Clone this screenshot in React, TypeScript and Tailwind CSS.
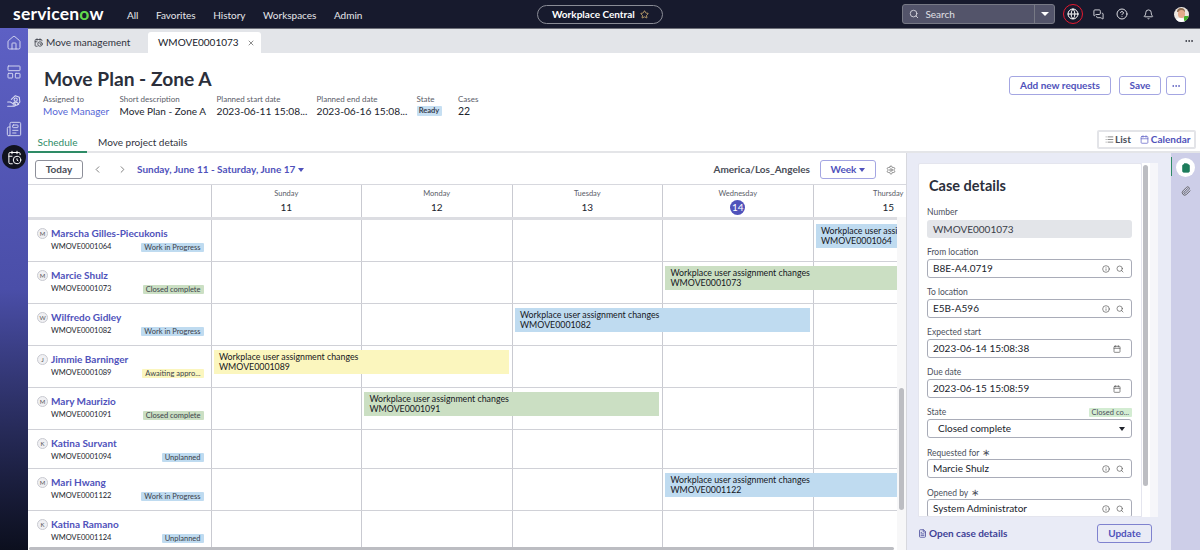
import {
  Bell,
  Calendar,
  CalendarClock,
  ChevronLeft,
  ChevronRight,
  CircleHelp,
  Clipboard,
  Ellipsis,
  FileText,
  Globe,
  Home,
  Info,
  LayoutPanelTop,
  List,
  MessagesSquare,
  Newspaper,
  Paperclip,
  Search,
  Settings,
  Star,
  X,
} from 'lucide-react';

const rows = [
  { letter: 'M', name: 'Marscha Gilles-Piecukonis', id: 'WMOVE0001064', status: 'Work in Progress', tone: 'blue', h: 'h-[42px]' },
  { letter: 'M', name: 'Marcie Shulz', id: 'WMOVE0001073', status: 'Closed complete', tone: 'green', h: 'h-[42px]' },
  { letter: 'W', name: 'Wilfredo Gidley', id: 'WMOVE0001082', status: 'Work in Progress', tone: 'blue', h: 'h-[42px]' },
  { letter: 'J', name: 'Jimmie Barninger', id: 'WMOVE0001089', status: 'Awaiting appro...', tone: 'yellow', h: 'h-[42px]' },
  { letter: 'M', name: 'Mary Maurizio', id: 'WMOVE0001091', status: 'Closed complete', tone: 'green', h: 'h-[42px]' },
  { letter: 'K', name: 'Katina Survant', id: 'WMOVE0001094', status: 'Unplanned', tone: 'blue', h: 'h-[39px]' },
  { letter: 'M', name: 'Mari Hwang', id: 'WMOVE0001122', status: 'Work in Progress', tone: 'blue', h: 'h-[42px]' },
  { letter: 'K', name: 'Katina Ramano', id: 'WMOVE0001124', status: 'Unplanned', tone: 'blue', h: 'h-[42px]' },
];

const toneClass: Record<string, string> = {
  blue: 'bg-[#bfdbf0]',
  green: 'bg-[#cbdfc3]',
  yellow: 'bg-[#fbf6be]',
};

const days = [
  { name: 'Sunday', num: '11' },
  { name: 'Monday', num: '12' },
  { name: 'Tuesday', num: '13' },
  { name: 'Wednesday', num: '14', today: true },
  { name: 'Thursday', num: '15' },
];

// which day column each case starts in, and how many it spans
const eventPlace: Record<string, string> = {
  WMOVE0001064: 'col-start-6 col-span-1 ml-[3px]',
  WMOVE0001073: 'col-start-5 col-span-2 ml-[3px]',
  WMOVE0001082: 'col-start-4 col-span-2 ml-[3px] mr-[3px]',
  WMOVE0001089: 'col-start-2 col-span-2 ml-[3px] mr-[3px]',
  WMOVE0001091: 'col-start-3 col-span-2 ml-[3px] mr-[3px]',
  WMOVE0001122: 'col-start-5 col-span-2 ml-[3px]',
};

function Field({
  label,
  value,
  date,
  star,
}: {
  label: string;
  value: string;
  date?: boolean;
  star?: boolean;
}) {
  return (
    <div className="mb-[3px] h-[37px]">
      <div className="h-[15px] text-[8.5px] leading-[17px] text-[#4b4f5c]">
        {label}
        {star && <span className="ml-[3px] text-[10px]">∗</span>}
      </div>
      <div className="flex h-[19px] items-center rounded-[3px] border border-[#a9acb8] pl-[5px] pr-[5px] text-[10px] text-[#20232c]">
        <span className="flex-1">{value}</span>
        {date ? (
          <Calendar size={8} className="mr-[5px] text-[#555]" />
        ) : (
          <>
            <Info size={8} className="mr-[6px] text-[#555]" />
            <Search size={8} className="mr-[2px] text-[#555]" />
          </>
        )}
      </div>
    </div>
  );
}

// the workspace icon in the rail: a hand holding a person
function CaseHandIcon() {
  return (
    <svg width="16" height="16" viewBox="0 0 24 24" fill="none" stroke="currentColor" strokeWidth="1.6" strokeLinecap="round" strokeLinejoin="round" className="mt-[13px]">
      <path d="M8 9.5 14 4l6 2.5.8 7-3.3 4" />
      <circle cx="14.5" cy="10" r="2.4" />
      <path d="M11 15.5c.6-1.2 2-1.8 3.5-1.8s2.4.5 3 1.5" />
      <path d="M2.5 13.5h4l4 2.5h3c1 0 1 2 0 2h-3" />
      <path d="M2.5 20h9.5l7-3" />
    </svg>
  );
}

export default function App() {
  return (
    <div className="flex h-screen flex-col overflow-hidden bg-white font-['Lato',sans-serif] text-[#20232c]">
      {/* Top nav */}
      <div className="relative flex h-[29px] shrink-0 items-center border-b border-[#6d6f78] bg-[#171a2d] text-white">
        <div className="ml-[13px] w-[114px] text-[17.5px] font-bold leading-none tracking-[0.2px]">
          servicen<span className="text-[#62d84e]">o</span>w
        </div>
        <div className="flex items-center gap-[17.5px] pt-[2px] text-[10px] text-[#e6e7ea]">
          <span>All</span>
          <span>Favorites</span>
          <span>History</span>
          <span>Workspaces</span>
          <span>Admin</span>
        </div>
        <div className="ml-[175px] flex h-[19px] w-[126px] items-center justify-center gap-[5px] rounded-full border border-[#8a8c96] text-[10px] font-bold">
          Workplace Central
          <Star size={9} className="text-[#e5c07b]" />
        </div>
        <div className="ml-[239px] flex h-[20px] w-[153px] items-center rounded-[3px] border border-[#777985] bg-[#53546a] text-[10px] text-[#e0e0e6]">
          <Search size={10} className="ml-[6px] mr-[6px]" />
          <span className="flex-1">Search</span>
          <span className="flex h-full w-[20px] items-center justify-center border-l border-[#777985]">
            <span className="h-0 w-0 border-x-[4px] border-t-[4px] border-x-transparent border-t-white"></span>
          </span>
        </div>
        <div className="ml-[8px] flex h-[20px] w-[20px] items-center justify-center rounded-full border border-[#e5182f]">
          <Globe size={12} />
        </div>
        <MessagesSquare size={11} className="ml-[10px] text-[#dcdde2]" />
        <CircleHelp size={12} className="ml-[12px] text-[#dcdde2]" />
        <Bell size={11} className="ml-[15px] text-[#dcdde2]" />
        <div className="relative ml-[20px] h-[15px] w-[15px] overflow-hidden rounded-full bg-[#ece7e1]">
          <div className="absolute left-[3px] top-[1px] h-[4px] w-[8px] rounded-t-full bg-[#8a6a4f]"></div>
          <div className="absolute left-[4px] top-[3px] h-[8px] w-[7px] rounded-full bg-[#e3ab8b]"></div>
          <div className="absolute bottom-0 left-[2px] h-[4px] w-[9px] rounded-t-full bg-white"></div>
          <div className="absolute bottom-[1px] right-0 h-[5px] w-[5px] rounded-[1px] bg-[#43b02a]"></div>
        </div>
        <div className="absolute -bottom-[1px] left-0 h-[1px] w-[28px] bg-[#5d60c4]"></div>
      </div>

      <div className="flex min-h-0 flex-1">
        {/* Left rail */}
        <div className="flex w-[28px] shrink-0 flex-col items-center bg-gradient-to-b from-[#5d60c4] via-[#4a4ea8] to-[#0c0f1e] pt-[6px] text-[#d9dbf2]">
          <Home size={16} strokeWidth={1.4} />
          <LayoutPanelTop size={16} strokeWidth={1.4} className="mt-[13px]" />
          <CaseHandIcon />
          <Newspaper size={16} strokeWidth={1.4} className="mt-[12px]" />
          <div className="mt-[8px] flex h-[24px] w-[24px] items-center justify-center rounded-full bg-[#11131f] text-white">
            <CalendarClock size={15} strokeWidth={1.6} />
          </div>
        </div>

        <div className="flex min-w-0 flex-1 flex-col">
          {/* Tab strip */}
          <div className="flex h-[24px] shrink-0 bg-[#e3e5e9] text-[10px]">
            <div className="flex w-[120px] items-center pl-[6px] pt-[2px] text-[#30333d]">
              <CalendarClock size={9} className="mr-[3px]" />
              Move management
            </div>
            <div className="mt-[3px] flex w-[113px] items-center rounded-t-[3px] bg-white pl-[10px]">
              WMOVE0001073
              <X size={8} className="ml-[8px] text-[#555]" />
            </div>
            <div className="flex-1"></div>
            <Ellipsis size={10} className="mr-[6px] mt-[7px]" />
          </div>

          {/* Record header */}
          <div className="flex h-[100px] shrink-0 flex-col">
            <div className="flex h-[76px] justify-between pl-[16px] pr-[14px]">
              <div>
                <h1 className="mt-[13px] text-[19.2px] font-bold leading-[26px] text-[#2b2f3b]">Move Plan - Zone A</h1>
                <div className="-ml-[1px] mt-[2px] flex text-[10px]">
                  <div className="w-[76.5px]">
                    <div className="text-[8px] leading-[11px] text-[#5a5d68]">Assigned to</div>
                    <div className="leading-[12px] text-[#5566d6]">Move Manager</div>
                  </div>
                  <div className="w-[97px]">
                    <div className="text-[8px] leading-[11px] text-[#5a5d68]">Short description</div>
                    <div className="leading-[12px]">Move Plan - Zone A</div>
                  </div>
                  <div className="w-[100px] text-[10.2px]">
                    <div className="text-[8px] leading-[11px] text-[#5a5d68]">Planned start date</div>
                    <div className="leading-[12px]">2023-06-11 15:08...</div>
                  </div>
                  <div className="w-[100px] text-[10.2px]">
                    <div className="text-[8px] leading-[11px] text-[#5a5d68]">Planned end date</div>
                    <div className="leading-[12px]">2023-06-16 15:08...</div>
                  </div>
                  <div className="w-[41.5px]">
                    <div className="text-[8px] leading-[11px] text-[#5a5d68]">State</div>
                    <div className="mt-[1px] h-[10px] w-[25px] rounded-[1px] bg-[#c6dff2] text-center text-[7.5px] font-bold leading-[10px] text-[#36404f]">
                      Ready
                    </div>
                  </div>
                  <div>
                    <div className="text-[8px] leading-[11px] text-[#5a5d68]">Cases</div>
                    <div className="text-[10.5px] leading-[12px]">22</div>
                  </div>
                </div>
              </div>
              <div className="mt-[23px] flex h-[19px] gap-[8px] text-[10px] font-bold text-[#4f52bb]">
                <button className="w-[102px] rounded-[3px] border border-[#a4a6e2]">Add new requests</button>
                <button className="w-[42px] rounded-[3px] border border-[#a4a6e2]">Save</button>
                <button className="-ml-[3px] flex w-[20px] items-center justify-center rounded-[3px] border border-[#a4a6e2]">
                  <Ellipsis size={10} />
                </button>
              </div>
            </div>
            <div className="flex h-[24px] items-end justify-between border-b-2 border-[#e4e5e8] pr-[4px] text-[10px]">
              <div className="flex h-full">
                <div className="-mb-[2px] flex w-[59px] items-center justify-center border-b-2 border-[#2e8b66] pt-[4px] text-[#2e8b66]">Schedule</div>
                <div className="ml-[11px] flex items-center pt-[4px] text-[#30333d]">Move project details</div>
              </div>
              <div className="mb-[2px] flex h-[19px] w-[99px] items-center rounded-[2px] border-2 border-[#e3e4e8] pl-[6px] text-[10px] font-bold">
                <List size={9} className="mr-[1px] text-[#666]" />
                <span className="text-[#4a4d58]">List</span>
                <Calendar size={9} className="ml-[9px] mr-[2px] text-[#6568c8]" />
                <span className="text-[#4f52bb]">Calendar</span>
              </div>
            </div>
          </div>

          <div className="flex min-h-0 flex-1">
            {/* Schedule */}
            <div className="relative flex w-[878px] shrink-0 flex-col overflow-hidden">
              <div className="flex h-[32px] shrink-0 items-center border-b border-[#d7d8de] pl-[7px] pr-[10px] pt-[2px]">
                <button className="h-[19px] w-[48px] rounded-[3px] border border-[#8d8f99] text-[10px] font-bold text-[#4a4d58]">Today</button>
                <ChevronLeft size={11} className="ml-[9px] text-[#777]" />
                <ChevronRight size={11} className="ml-[14px] text-[#777]" />
                <span className="ml-[9px] text-[10px] font-bold text-[#4f52bb]">Sunday, June 11 - Saturday, June 17</span>
                <span className="ml-[3px] h-0 w-0 border-x-[3.5px] border-t-[4px] border-x-transparent border-t-[#4f52bb]"></span>
                <span className="ml-auto text-[10px] font-bold text-[#4a4d58]">America/Los_Angeles</span>
                <button className="ml-[10px] flex h-[19px] w-[56px] items-center justify-center rounded-[3px] border border-[#a4a6e2] text-[10px] font-bold text-[#4f52bb]">
                  Week
                  <span className="ml-[3px] h-0 w-0 border-x-[3.5px] border-t-[4px] border-x-transparent border-t-[#4f52bb]"></span>
                </button>
                <Settings size={10} className="ml-[10px] text-[#777]" />
              </div>

              {/* Day headings */}
              <div className="grid h-[35px] shrink-0 grid-cols-[182.5px_150.5px_150.5px_150.5px_150.5px_150.5px] border-b-[3px] border-[#dcdde2]">
                <div></div>
                {days.map((d) => (
                  <div key={d.name} className="border-l border-[#c9cad1] pt-[3px] text-center">
                    <div className="text-[7.5px] leading-[11px] text-[#5a5d68]">{d.name}</div>
                    {d.today ? (
                      <div className="mx-auto mt-[1px] flex h-[15px] w-[15px] items-center justify-center rounded-full bg-[#4f52bb] text-[10px] text-white">{d.num}</div>
                    ) : (
                      <div className="mt-[1px] text-[10px] leading-[15px]">{d.num}</div>
                    )}
                  </div>
                ))}
              </div>

              {/* Case rows */}
              <div className="min-h-0 flex-1">
                {rows.map((r) => (
                  <div
                    key={r.id}
                    className={`grid ${r.h} grid-cols-[182.5px_150.5px_150.5px_150.5px_150.5px_150.5px] border-b border-[#d0d1d7]`}
                  >
                    <div className="col-start-1 row-start-1 pl-[9px] pr-[7px] pt-[6px]">
                      <div className="flex items-center">
                        <span className="flex h-[11px] w-[11px] items-center justify-center rounded-full border border-[#c9cad1] bg-[#f0f0f3] text-[6px] text-[#555]">
                          {r.letter}
                        </span>
                        <span className="ml-[3px] text-[10px] font-bold leading-[14px] text-[#4f52bb]">{r.name}</span>
                      </div>
                      <div className="mt-[1px] flex items-center justify-between pl-[14px]">
                        <span className="text-[7.5px] leading-[12px] text-[#20232c]">{r.id}</span>
                        <span className={`${toneClass[r.tone]} h-[9px] rounded-[1px] px-[3px] text-[7.5px] leading-[9px] text-[#3a3f4a]`}>
                          {r.status}
                        </span>
                      </div>
                    </div>
                    {[2, 3, 4, 5, 6].map((c) => (
                      <div
                        key={c}
                        className={`row-start-1 border-l border-[#c9cad1] ${
                          c === 2 ? 'col-start-2' : c === 3 ? 'col-start-3' : c === 4 ? 'col-start-4' : c === 5 ? 'col-start-5' : 'col-start-6'
                        }`}
                      ></div>
                    ))}
                    {eventPlace[r.id] && (
                      <div
                        className={`${eventPlace[r.id]} ${toneClass[r.tone]} z-10 row-start-1 mt-[4px] h-[24px] overflow-hidden whitespace-nowrap pl-[5.5px] pt-[2px] text-[8.8px] leading-[10px] text-[#15171d]`}
                      >
                        Workplace user assignment changes
                        <br />
                        {r.id}
                      </div>
                    )}
                  </div>
                ))}
              </div>

              {/* Scrollbars */}
              <div className="absolute bottom-0 right-0 top-[64px] z-20 w-[9px] bg-[#f7f7f8]">
                <div className="ml-[2px] mt-[171px] h-[122px] w-[5px] rounded-full bg-[#bcbdc2]"></div>
              </div>
              <div className="absolute bottom-0 left-[1px] right-[12px] z-20 h-[3px] rounded-full bg-[#bcbdc2]"></div>
            </div>

            {/* Case details panel */}
            <div className="flex w-[265px] shrink-0 flex-col border-l border-[#d7d8de] bg-[#e9ebf6] pl-[11px] pt-[10px]">
              <div className="flex h-[354px] w-[242px]">
                <div className="w-[224px] overflow-hidden rounded-t-[2px] border border-[#e4e5ee] bg-white pl-[8px] pr-[9px]">
                  <h2 className="ml-[2px] mt-[12px] text-[14.5px] font-bold leading-[20px] text-[#2b2f3b]">Case details</h2>
                  <div className="mt-[8px] h-[37px]">
                    <div className="h-[15px] text-[8.5px] leading-[17px] text-[#4b4f5c]">Number</div>
                    <div className="mt-[1px] flex h-[18px] items-center rounded-[3px] bg-[#e3e5e9] pl-[6px] text-[10px] text-[#3a3d48]">WMOVE0001073</div>
                  </div>
                  <div className="h-[3px]"></div>
                  <Field label="From location" value="B8E-A4.0719" />
                  <Field label="To location" value="E5B-A596" />
                  <Field label="Expected start" value="2023-06-14 15:08:38" date />
                  <Field label="Due date" value="2023-06-15 15:08:59" date />
                  <div className="mb-[3px] h-[37px]">
                    <div className="flex h-[15px] items-center justify-between pt-[2px] text-[8.5px] text-[#4b4f5c]">
                      State
                      <span className="h-[9px] rounded-[1px] bg-[#d3ecd2] px-[3px] text-[7.5px] leading-[9px]">Closed co...</span>
                    </div>
                    <div className="flex h-[19px] items-center rounded-[3px] border border-[#a9acb8] pl-[10px] pr-[6px] text-[10px]">
                      <span className="flex-1">Closed complete</span>
                      <span className="h-0 w-0 border-x-[3.5px] border-t-[4px] border-x-transparent border-t-[#20232c]"></span>
                    </div>
                  </div>
                  <Field label="Requested for" value="Marcie Shulz" star />
                  <Field label="Opened by" value="System Administrator" star />
                </div>
                <div className="h-full w-[8px] bg-white">
                  <div className="ml-[1px] mt-[2px] h-[321px] w-[5px] rounded-full bg-[#bcbdc2]"></div>
                </div>
                <div className="h-full w-[8px] bg-[#f6f6fa]"></div>
              </div>
              <div className="flex h-[37px] w-[234px] items-center justify-between">
                <span className="flex items-center text-[10px] font-bold text-[#3f4296]">
                  <FileText size={9} className="mr-[2px]" />
                  Open case details
                </span>
                <button className="h-[19px] w-[55px] rounded-[3px] border border-[#7f82cf] text-[10px] font-bold text-[#4f52bb]">Update</button>
              </div>
            </div>

            {/* Right rail */}
            <div className="flex flex-1 flex-col items-center bg-[#cdcee8] pt-[5px]">
              <div className="relative flex h-[19px] w-[19px] items-center justify-center rounded-full bg-white">
                <span className="absolute -left-[5px] -top-[1px] h-[19px] w-[1px] bg-[#2e8b66]"></span>
                <Clipboard size={10} fill="currentColor" className="text-[#1d7c5b]" />
              </div>
              <Paperclip size={10} className="mt-[9px] text-[#555]" />
            </div>
          </div>
        </div>
      </div>
    </div>
  );
}
